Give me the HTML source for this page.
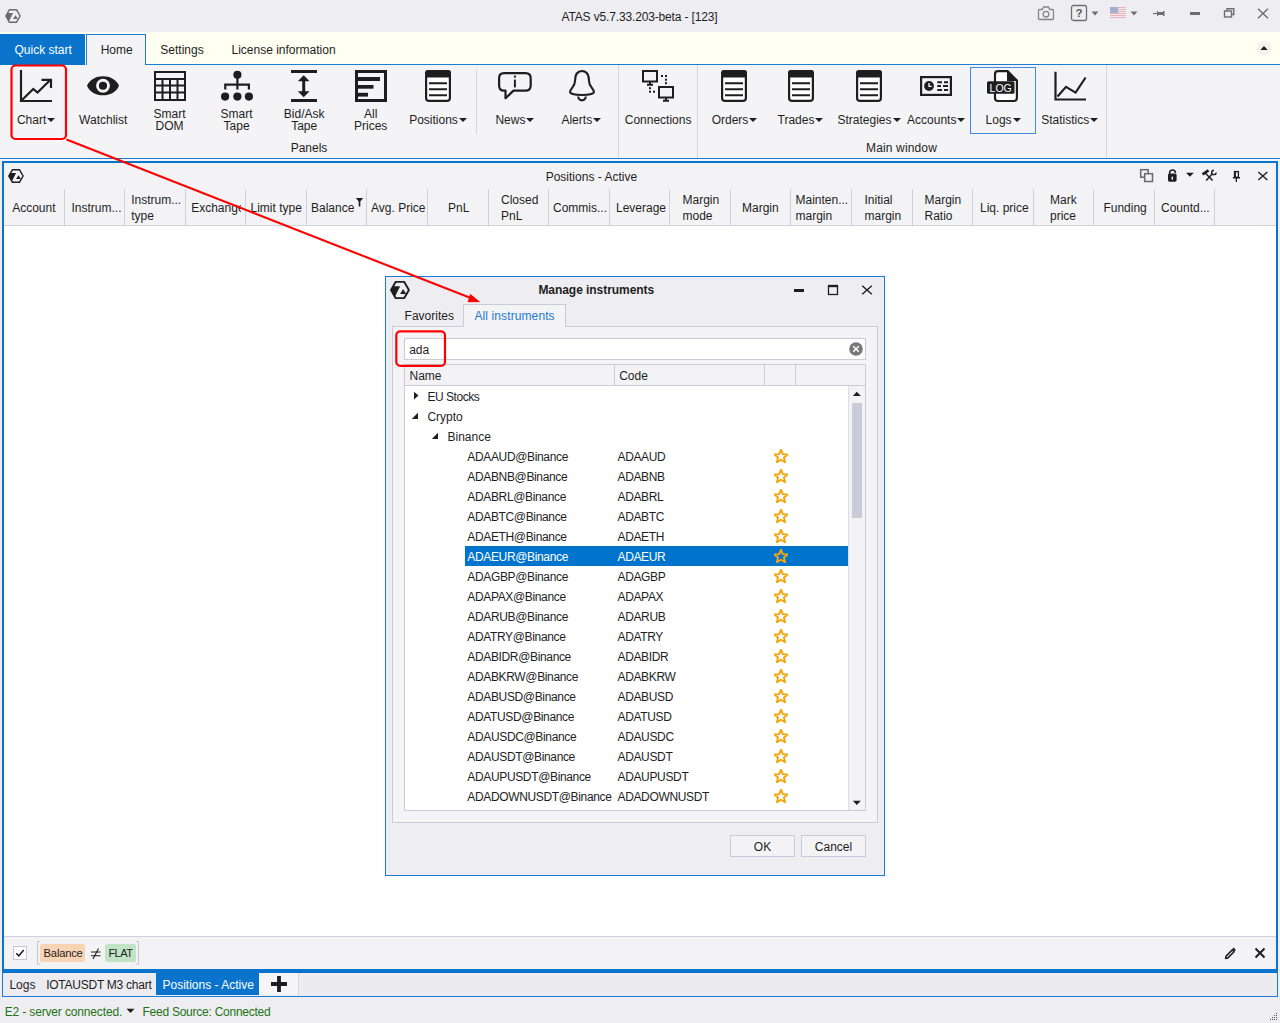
<!DOCTYPE html><html><head><meta charset="utf-8"><style>
html,body{margin:0;padding:0;}
body{width:1280px;height:1023px;overflow:hidden;position:relative;background:#eeedf2;font-family:"Liberation Sans",sans-serif;color:#1e1e1e;}
.a{position:absolute;}
.t{position:absolute;white-space:nowrap;line-height:1;}
</style></head><body>

<div class="a" style="left:0px;top:0px;width:1280px;height:32px;background:#eeedf2;"></div>
<div class="a" style="left:0px;top:32px;width:1280px;height:33px;background:#fffff2;"></div>
<svg class="a" style="left:5px;top:9px;" width="16" height="14" viewBox="0 0 16 14"><g transform="scale(0.8000,0.7865)"><path d="M5.6 0.9 H14.3 L18.9 8.9 L14.3 16.9 H5.6 L1 8.9 Z" fill="none" stroke="#6b6b70" stroke-width="1.8" stroke-linejoin="round"/><path d="M3.2 5.1 H10.1 L4.8 15.8 L0.8 8.9 Z" fill="#6b6b70"/><path d="M13.1 8 L16.2 12.8 H10.1 Z" fill="#6b6b70"/></g></svg>
<div class="t" style="left:561.5px;top:11px;font-size:12px;letter-spacing:-0.15px;">ATAS v5.7.33.203-beta - [123]</div>
<svg class="a" style="left:1036px;top:4px;" width="20" height="18" viewBox="0 0 20 18"><path d="M3.5 5.5 H6.2 L7.6 3 H12.4 L13.8 5.5 H16.5 Q17.5 5.5 17.5 6.5 V14.5 Q17.5 15.5 16.5 15.5 H3.5 Q2.5 15.5 2.5 14.5 V6.5 Q2.5 5.5 3.5 5.5 Z" fill="none" stroke="#858589" stroke-width="1.3"/><circle cx="10" cy="10.2" r="2.8" fill="none" stroke="#858589" stroke-width="1.3"/></svg>
<svg class="a" style="left:1070px;top:4px;" width="18" height="18" viewBox="0 0 18 18"><rect x="1.5" y="1.5" width="15" height="15" rx="2" fill="none" stroke="#6e6e72" stroke-width="1.3"/><text x="9" y="13.3" font-family="Liberation Sans" font-size="11.5" font-weight="bold" text-anchor="middle" fill="#58585c">?</text></svg>
<svg class="a" style="left:1091px;top:11px;" width="8" height="5" viewBox="0 0 8 5"><path d="M0.5 0.5 H7.5 L4 4.5 Z" fill="#6e6e72"/></svg>
<svg class="a" style="left:1110px;top:7px;" width="16" height="12" viewBox="0 0 16 12"><rect x="0" y="0" width="16" height="12" fill="#f1e9ec"/><rect x="0" y="0" width="16" height="1" fill="#e8b4bb"/><rect x="0" y="2" width="16" height="1" fill="#e8b4bb"/><rect x="0" y="4" width="16" height="1" fill="#e8b4bb"/><rect x="0" y="6" width="16" height="1" fill="#e8b4bb"/><rect x="0" y="8" width="16" height="1" fill="#e8b4bb"/><rect x="0" y="10" width="16" height="1" fill="#e8b4bb"/><rect x="0" y="0" width="8" height="6" fill="#a4afd0"/></svg>
<svg class="a" style="left:1130px;top:11px;" width="8" height="5" viewBox="0 0 8 5"><path d="M0.5 0.5 H7.5 L4 4.5 Z" fill="#6e6e72"/></svg>
<svg class="a" style="left:1152px;top:9px;" width="14" height="9" viewBox="0 0 14 9"><path d="M1 4.5 H5" stroke="#6e6e72" stroke-width="1.2"/><path d="M5 2 H6 V3 H11 V2 H12.5 V7 H11 V6 H6 V7 H5 Z" fill="#6e6e72"/></svg>
<div class="a" style="left:1190px;top:12px;width:10px;height:3px;background:#6e6e72;"></div>
<svg class="a" style="left:1222px;top:7px;" width="14" height="12" viewBox="0 0 14 12"><rect x="2.5" y="4" width="7" height="6" fill="none" stroke="#6e6e72" stroke-width="1.4"/><path d="M5 4 V1.7 H11.8 V7.5 H9.5" fill="none" stroke="#6e6e72" stroke-width="1.4"/></svg>
<svg class="a" style="left:1257px;top:8px;" width="12" height="11" viewBox="0 0 12 11"><path d="M1 0.8 L11 10.2 M11 0.8 L1 10.2" stroke="#6e6e72" stroke-width="1.4"/></svg>
<div class="a" style="left:0px;top:34px;width:85px;height:31px;background:#0a74cc;"></div>
<div class="t" style="left:14.5px;top:44px;font-size:12px;color:#ffffff;">Quick start</div>
<div class="a" style="left:146px;top:64px;width:1134px;height:1px;background:#1c7cd5;"></div>
<div class="a" style="left:86px;top:34px;width:60px;height:31px;background:#f4f4f6;border:1px solid #1c7cd5;border-bottom:none;box-sizing:border-box;"></div>
<div class="t" style="left:100.7px;top:44px;font-size:12px;">Home</div>
<div class="t" style="left:160.3px;top:44px;font-size:12px;">Settings</div>
<div class="t" style="left:231.5px;top:44px;font-size:12px;">License information</div>
<svg class="a" style="left:1256px;top:40px;" width="16" height="16" viewBox="0 0 16 16"><circle cx="8" cy="8" r="7.5" fill="#f2f2ee"/><path d="M4.3 10 H11.7 L8 6 Z" fill="#1e1e1e"/></svg>
<div class="a" style="left:0px;top:65px;width:1280px;height:93px;background:#f4f4f6;"></div>
<div class="a" style="left:0px;top:158px;width:1280px;height:1px;background:#1c7cd5;"></div>
<div class="a" style="left:0px;top:159px;width:1280px;height:2px;background:#f4f4f6;"></div>
<div class="a" style="left:618px;top:65px;width:1px;height:93px;background:#d3d4de;"></div>
<div class="a" style="left:697px;top:65px;width:1px;height:93px;background:#d3d4de;"></div>
<div class="a" style="left:1106px;top:65px;width:1px;height:93px;background:#d3d4de;"></div>
<div class="a" style="left:476px;top:69px;width:1px;height:65px;background:#d3d4de;"></div>
<div class="t" style="left:109px;top:142px;font-size:12px;width:400px;text-align:center;">Panels</div>
<div class="t" style="left:701.5px;top:142px;font-size:12px;width:400px;text-align:center;letter-spacing:0.15px;">Main window</div>
<svg class="a" style="left:16px;top:68px;" width="40" height="36" viewBox="0 0 40 36"><path d="M5 2 V33 H36" fill="none" stroke="#1e1e1e" stroke-width="2.2"/><path d="M6 32 L17.3 21 L21.5 24.5 L34.5 11.8" fill="none" stroke="#1e1e1e" stroke-width="2.2"/><path d="M25.5 11.8 H35 V20" fill="none" stroke="#1e1e1e" stroke-width="2.2"/></svg>
<div class="t" style="left:-163.9px;top:114px;font-size:12px;width:400px;text-align:center;">Chart<span style="display:inline-block;width:0;height:0;border-left:4px solid transparent;border-right:4px solid transparent;border-top:4.5px solid #1e1e1e;margin-left:1px;vertical-align:2px;"></span></div>
<svg class="a" style="left:85px;top:74px;" width="36" height="24" viewBox="0 0 36 24"><path d="M2 11.75 C7 -1, 29 -1, 34 11.75 C29 24.5, 7 24.5, 2 11.75 Z" fill="#1e1e1e"/><circle cx="18" cy="11.75" r="6.9" fill="#f4f4f6"/><circle cx="18" cy="11.75" r="4.1" fill="#1e1e1e"/></svg>
<div class="t" style="left:-96.8px;top:114px;font-size:12px;width:400px;text-align:center;">Watchlist</div>
<svg class="a" style="left:154px;top:71px;" width="32" height="30" viewBox="0 0 32 30"><rect x="1" y="1" width="30" height="28" fill="none" stroke="#1e1e1e" stroke-width="2"/><path d="M1 8 H31" stroke="#1e1e1e" stroke-width="2"/><path d="M1 14.5 H31" stroke="#1e1e1e" stroke-width="2"/><path d="M1 21.5 H31" stroke="#1e1e1e" stroke-width="2"/><path d="M8.5 8 V29" stroke="#1e1e1e" stroke-width="2"/><path d="M16 8 V29" stroke="#1e1e1e" stroke-width="2"/><path d="M23.5 8 V29" stroke="#1e1e1e" stroke-width="2"/></svg>
<div class="t" style="left:-30.5px;top:108px;font-size:12px;width:400px;text-align:center;">Smart</div>
<div class="t" style="left:-30.5px;top:120px;font-size:12px;width:400px;text-align:center;">DOM</div>
<svg class="a" style="left:219px;top:69px;" width="36" height="34" viewBox="0 0 36 34"><circle cx="18.4" cy="5.8" r="4.1" fill="#1e1e1e"/><circle cx="6.1" cy="27.6" r="4.1" fill="#1e1e1e"/><circle cx="18.4" cy="27.6" r="4.1" fill="#1e1e1e"/><circle cx="29.9" cy="27.6" r="4.1" fill="#1e1e1e"/><path d="M6.3 20.5 V15.6 H29.9 V20.5 M18.4 9 V20.5" fill="none" stroke="#1e1e1e" stroke-width="2.2"/></svg>
<div class="t" style="left:36.599999999999994px;top:108px;font-size:12px;width:400px;text-align:center;">Smart</div>
<div class="t" style="left:36.599999999999994px;top:120px;font-size:12px;width:400px;text-align:center;">Tape</div>
<svg class="a" style="left:289px;top:68px;" width="30" height="36" viewBox="0 0 30 36"><rect x="2" y="2" width="26" height="3" fill="#1e1e1e"/><rect x="2" y="31" width="26" height="3" fill="#1e1e1e"/><path d="M14.7 7.3 L20.6 13.3 H8.8 Z M14.7 29.2 L20.6 23.2 H8.8 Z" fill="#1e1e1e"/><rect x="13.2" y="12" width="3" height="12" fill="#1e1e1e"/></svg>
<div class="t" style="left:104.19999999999999px;top:108px;font-size:12px;width:400px;text-align:center;">Bid/Ask</div>
<div class="t" style="left:104.19999999999999px;top:120px;font-size:12px;width:400px;text-align:center;">Tape</div>
<svg class="a" style="left:353px;top:68px;" width="36" height="36" viewBox="0 0 36 36"><rect x="3.5" y="3.5" width="29" height="29" fill="none" stroke="#1e1e1e" stroke-width="3"/><rect x="2" y="9" width="25" height="4" fill="#1e1e1e"/><rect x="2" y="17" width="18.5" height="3.7" fill="#1e1e1e"/><rect x="2" y="24.8" width="13" height="3.8" fill="#1e1e1e"/></svg>
<div class="t" style="left:170.7px;top:108px;font-size:12px;width:400px;text-align:center;">All</div>
<div class="t" style="left:170.7px;top:120px;font-size:12px;width:400px;text-align:center;">Prices</div>
<svg class="a" style="left:424px;top:69px;" width="28" height="34" viewBox="0 0 28 34"><rect x="2.1" y="2.1" width="23.8" height="29.8" rx="3" fill="#ffffff" stroke="#1e1e1e" stroke-width="2.2"/><path d="M1 4 Q1 1 4 1 H24 Q27 1 27 4 V8.5 H1 Z" fill="#1e1e1e"/><path d="M5 14.3 H23 M5 20.3 H23 M5 26.3 H23" stroke="#1e1e1e" stroke-width="2"/></svg>
<div class="t" style="left:238px;top:114px;font-size:12px;width:400px;text-align:center;">Positions<span style="display:inline-block;width:0;height:0;border-left:4px solid transparent;border-right:4px solid transparent;border-top:4.5px solid #1e1e1e;margin-left:1px;vertical-align:2px;"></span></div>
<svg class="a" style="left:497px;top:70px;" width="36" height="32" viewBox="0 0 36 32"><path d="M7 3.1 H28.5 Q33.7 3.1 33.7 8.3 V15.4 Q33.7 20.6 28.5 20.6 H16.5 L8.5 28.3 V20.6 H7 Q2.1 20.6 2.1 15.4 V8.3 Q2.1 3.1 7 3.1 Z" fill="none" stroke="#1e1e1e" stroke-width="2.2" stroke-linejoin="round"/><rect x="16.9" y="5.6" width="2" height="2" fill="#1e1e1e"/><rect x="16.9" y="9.6" width="2" height="7.8" fill="#1e1e1e"/></svg>
<div class="t" style="left:314.9px;top:114px;font-size:12px;width:400px;text-align:center;">News<span style="display:inline-block;width:0;height:0;border-left:4px solid transparent;border-right:4px solid transparent;border-top:4.5px solid #1e1e1e;margin-left:1px;vertical-align:2px;"></span></div>
<svg class="a" style="left:567px;top:68px;" width="30" height="36" viewBox="0 0 30 36"><path d="M15 3 C9.5 3 8 8 8 13 C8 19 3 20.5 3 24 C3 28 27 28 27 24 C27 20.5 22 19 22 13 C22 8 20.5 3 15 3 Z" fill="none" stroke="#1e1e1e" stroke-width="2.1" stroke-linejoin="round"/><path d="M11.2 28.6 A3.8 3.8 0 0 0 18.8 28.6" fill="none" stroke="#1e1e1e" stroke-width="2.1"/></svg>
<div class="t" style="left:381.29999999999995px;top:114px;font-size:12px;width:400px;text-align:center;">Alerts<span style="display:inline-block;width:0;height:0;border-left:4px solid transparent;border-right:4px solid transparent;border-top:4.5px solid #1e1e1e;margin-left:1px;vertical-align:2px;"></span></div>
<svg class="a" style="left:640px;top:68px;" width="36" height="36" viewBox="0 0 36 36"><rect x="3" y="3" width="14" height="10.5" fill="none" stroke="#1e1e1e" stroke-width="2"/><path d="M10 13.5 V16.5 M7 16.7 H13" stroke="#1e1e1e" stroke-width="2"/><rect x="19" y="19" width="14" height="10.5" fill="none" stroke="#1e1e1e" stroke-width="2"/><path d="M26 29.5 V32.5 M23 32.7 H29" stroke="#1e1e1e" stroke-width="2"/><rect x="21" y="7" width="2" height="2" fill="#1e1e1e"/><rect x="25" y="7" width="2" height="2" fill="#1e1e1e"/><rect x="25" y="10.7" width="2" height="2" fill="#1e1e1e"/><rect x="25" y="14.2" width="2" height="2" fill="#1e1e1e"/><rect x="9" y="19.2" width="2" height="2" fill="#1e1e1e"/><rect x="9" y="22.7" width="2" height="2" fill="#1e1e1e"/><rect x="13" y="22.7" width="2" height="2" fill="#1e1e1e"/></svg>
<div class="t" style="left:458.1px;top:114px;font-size:12px;width:400px;text-align:center;">Connections</div>
<svg class="a" style="left:720px;top:69px;" width="28" height="34" viewBox="0 0 28 34"><rect x="2.1" y="2.1" width="23.8" height="29.8" rx="3" fill="#ffffff" stroke="#1e1e1e" stroke-width="2.2"/><path d="M1 4 Q1 1 4 1 H24 Q27 1 27 4 V8.5 H1 Z" fill="#1e1e1e"/><path d="M5 14.3 H23 M5 20.3 H23 M5 26.3 H23" stroke="#1e1e1e" stroke-width="2"/></svg>
<div class="t" style="left:534.5px;top:114px;font-size:12px;width:400px;text-align:center;">Orders<span style="display:inline-block;width:0;height:0;border-left:4px solid transparent;border-right:4px solid transparent;border-top:4.5px solid #1e1e1e;margin-left:1px;vertical-align:2px;"></span></div>
<svg class="a" style="left:787px;top:69px;" width="28" height="34" viewBox="0 0 28 34"><rect x="2.1" y="2.1" width="23.8" height="29.8" rx="3" fill="#ffffff" stroke="#1e1e1e" stroke-width="2.2"/><path d="M1 4 Q1 1 4 1 H24 Q27 1 27 4 V8.5 H1 Z" fill="#1e1e1e"/><path d="M5 14.3 H23 M5 20.3 H23 M5 26.3 H23" stroke="#1e1e1e" stroke-width="2"/></svg>
<div class="t" style="left:600.5px;top:114px;font-size:12px;width:400px;text-align:center;">Trades<span style="display:inline-block;width:0;height:0;border-left:4px solid transparent;border-right:4px solid transparent;border-top:4.5px solid #1e1e1e;margin-left:1px;vertical-align:2px;"></span></div>
<svg class="a" style="left:855px;top:69px;" width="28" height="34" viewBox="0 0 28 34"><rect x="2.1" y="2.1" width="23.8" height="29.8" rx="3" fill="#ffffff" stroke="#1e1e1e" stroke-width="2.2"/><path d="M1 4 Q1 1 4 1 H24 Q27 1 27 4 V8.5 H1 Z" fill="#1e1e1e"/><path d="M5 14.3 H23 M5 20.3 H23 M5 26.3 H23" stroke="#1e1e1e" stroke-width="2"/></svg>
<div class="t" style="left:669px;top:114px;font-size:12px;width:400px;text-align:center;">Strategies<span style="display:inline-block;width:0;height:0;border-left:4px solid transparent;border-right:4px solid transparent;border-top:4.5px solid #1e1e1e;margin-left:1px;vertical-align:2px;"></span></div>
<svg class="a" style="left:918px;top:74px;" width="36" height="24" viewBox="0 0 36 24"><rect x="3.1" y="3.1" width="29.8" height="17.8" fill="none" stroke="#1e1e1e" stroke-width="2.2"/><circle cx="11" cy="12" r="4.9" fill="#1e1e1e"/><path d="M11 9 V12.3 H13.7" fill="none" stroke="#fff" stroke-width="1.3"/><path d="M19.3 8.2 H24 M26 8.2 H30 M19.3 12 H23 M25 12 H30 M19.3 16 H24 M26 16 H30" stroke="#1e1e1e" stroke-width="2"/></svg>
<div class="t" style="left:736.25px;top:114px;font-size:12px;width:400px;text-align:center;">Accounts<span style="display:inline-block;width:0;height:0;border-left:4px solid transparent;border-right:4px solid transparent;border-top:4.5px solid #1e1e1e;margin-left:1px;vertical-align:2px;"></span></div>
<div class="a" style="left:970px;top:67px;width:66px;height:67px;border:1px solid #3d8ee0;box-sizing:border-box;"></div>
<svg class="a" style="left:985px;top:68px;" width="36" height="36" viewBox="0 0 36 36"><path d="M13 3.1 H22.5 L31.9 12.5 V30 Q31.9 33 28.9 33 H13 Q10 33 10 30 V6.1 Q10 3.1 13 3.1 Z" fill="#fff" stroke="#1e1e1e" stroke-width="2.2" stroke-linejoin="round"/><path d="M22 2.5 L32.5 13 H22 Z" fill="#1e1e1e"/><rect x="2" y="13.3" width="27.5" height="12.5" rx="1.5" fill="#1e1e1e"/><text x="15.7" y="24" font-family="Liberation Sans" font-size="10.5" text-anchor="middle" fill="#fff">LOG</text></svg>
<div class="t" style="left:803.1px;top:114px;font-size:12px;width:400px;text-align:center;">Logs<span style="display:inline-block;width:0;height:0;border-left:4px solid transparent;border-right:4px solid transparent;border-top:4.5px solid #1e1e1e;margin-left:1px;vertical-align:2px;"></span></div>
<svg class="a" style="left:1052px;top:69px;" width="38" height="34" viewBox="0 0 38 34"><path d="M3.5 2.8 V30.5 H34" fill="none" stroke="#1e1e1e" stroke-width="2.2"/><path d="M5.5 27.5 L14 17.8 L23.6 23.6 L33.6 8.5" fill="none" stroke="#1e1e1e" stroke-width="2.2"/></svg>
<div class="t" style="left:869.75px;top:114px;font-size:12px;width:400px;text-align:center;">Statistics<span style="display:inline-block;width:0;height:0;border-left:4px solid transparent;border-right:4px solid transparent;border-top:4.5px solid #1e1e1e;margin-left:1px;vertical-align:2px;"></span></div>
<div class="a" style="left:2px;top:161px;width:1276px;height:812px;background:#0a74cc;"></div>
<div class="a" style="left:4px;top:163px;width:1272px;height:63px;background:#f3f3f6;"></div>
<div class="a" style="left:4px;top:226px;width:1272px;height:710px;background:#ffffff;"></div>
<div class="a" style="left:4px;top:936px;width:1272px;height:1px;background:#cfd1dc;"></div>
<div class="a" style="left:4px;top:937px;width:1272px;height:32px;background:#f3f3f6;"></div>
<svg class="a" style="left:8px;top:169px;" width="16" height="14" viewBox="0 0 16 14"><g transform="scale(0.8000,0.7865)"><path d="M5.6 0.9 H14.3 L18.9 8.9 L14.3 16.9 H5.6 L1 8.9 Z" fill="none" stroke="#1e1e1e" stroke-width="1.8" stroke-linejoin="round"/><path d="M3.2 5.1 H10.1 L4.8 15.8 L0.8 8.9 Z" fill="#1e1e1e"/><path d="M13.1 8 L16.2 12.8 H10.1 Z" fill="#1e1e1e"/></g></svg>
<div class="t" style="left:545.7px;top:171px;font-size:12px;">Positions - Active</div>
<svg class="a" style="left:1138px;top:167px;" width="17" height="17" viewBox="0 0 17 17"><rect x="2.7" y="2.7" width="7.5" height="7.5" fill="none" stroke="#6a6a6a" stroke-width="1.5"/><rect x="6.7" y="6.7" width="7.8" height="7.8" fill="#f3f3f6" stroke="#6a6a6a" stroke-width="1.5"/></svg>
<svg class="a" style="left:1166px;top:167px;" width="13" height="17" viewBox="0 0 13 17"><path d="M3.6 7.5 V5.9 A2.9 2.9 0 0 1 9.4 5.9 V4.9" fill="none" stroke="#1e1e1e" stroke-width="1.5"/><rect x="2" y="6.6" width="8.6" height="8.1" rx="1.6" fill="#1e1e1e"/><rect x="5.6" y="9.6" width="1.4" height="3" fill="#fff"/></svg>
<svg class="a" style="left:1185px;top:172px;" width="10" height="6" viewBox="0 0 10 6"><path d="M1 0.8 H8.8 L4.9 4.7 Z" fill="#1e1e1e"/></svg>
<svg class="a" style="left:1201px;top:167px;" width="16" height="17" viewBox="0 0 16 17"><path d="M4.2 6 L11.6 13.6" stroke="#1e1e1e" stroke-width="1.5"/><path d="M1.5 7.4 L7.5 3.4" stroke="#1e1e1e" stroke-width="2.8"/><path d="M5.2 13.6 L11.6 6.6" stroke="#1e1e1e" stroke-width="1.5"/><path d="M12.9 3.2 A2.2 2.2 0 1 0 15.1 5.4" fill="none" stroke="#1e1e1e" stroke-width="1.4"/></svg>
<svg class="a" style="left:1230px;top:167px;" width="12" height="17" viewBox="0 0 12 17"><rect x="4.6" y="4.6" width="3.8" height="5.6" fill="none" stroke="#1e1e1e" stroke-width="1.3"/><rect x="3.9" y="3.9" width="2" height="6.3" fill="#1e1e1e"/><rect x="2.9" y="10" width="7.1" height="1.5" fill="#1e1e1e"/><rect x="5.7" y="11" width="1.3" height="4" fill="#1e1e1e"/></svg>
<svg class="a" style="left:1256px;top:170px;" width="13" height="12" viewBox="0 0 13 12"><path d="M2.3 2 L11.3 10 M11.3 2 L2.3 10" stroke="#1e1e1e" stroke-width="1.4"/></svg>
<div class="a" style="left:64px;top:189px;width:1px;height:36px;background:#cfd1dc;"></div>
<div class="a" style="left:124px;top:189px;width:1px;height:36px;background:#cfd1dc;"></div>
<div class="a" style="left:185px;top:189px;width:1px;height:36px;background:#cfd1dc;"></div>
<div class="a" style="left:245px;top:189px;width:1px;height:36px;background:#cfd1dc;"></div>
<div class="a" style="left:306px;top:189px;width:1px;height:36px;background:#cfd1dc;"></div>
<div class="a" style="left:366px;top:189px;width:1px;height:36px;background:#cfd1dc;"></div>
<div class="a" style="left:427px;top:189px;width:1px;height:36px;background:#cfd1dc;"></div>
<div class="a" style="left:488px;top:189px;width:1px;height:36px;background:#cfd1dc;"></div>
<div class="a" style="left:548px;top:189px;width:1px;height:36px;background:#cfd1dc;"></div>
<div class="a" style="left:609px;top:189px;width:1px;height:36px;background:#cfd1dc;"></div>
<div class="a" style="left:669px;top:189px;width:1px;height:36px;background:#cfd1dc;"></div>
<div class="a" style="left:730px;top:189px;width:1px;height:36px;background:#cfd1dc;"></div>
<div class="a" style="left:790px;top:189px;width:1px;height:36px;background:#cfd1dc;"></div>
<div class="a" style="left:851px;top:189px;width:1px;height:36px;background:#cfd1dc;"></div>
<div class="a" style="left:912px;top:189px;width:1px;height:36px;background:#cfd1dc;"></div>
<div class="a" style="left:972px;top:189px;width:1px;height:36px;background:#cfd1dc;"></div>
<div class="a" style="left:1033px;top:189px;width:1px;height:36px;background:#cfd1dc;"></div>
<div class="a" style="left:1093px;top:189px;width:1px;height:36px;background:#cfd1dc;"></div>
<div class="a" style="left:1154px;top:189px;width:1px;height:36px;background:#cfd1dc;"></div>
<div class="a" style="left:1214px;top:189px;width:1px;height:36px;background:#cfd1dc;"></div>
<div class="a" style="left:4px;top:225px;width:1272px;height:1px;background:#cfd1dc;"></div>
<div class="t" style="left:12.2px;top:202px;font-size:12px;">Account</div>
<div class="t" style="left:71.5px;top:202px;font-size:12px;">Instrum...</div>
<div class="t" style="left:131.2px;top:194px;font-size:12px;">Instrum...</div>
<div class="t" style="left:131.2px;top:210px;font-size:12px;">type</div>
<div class="t" style="left:191.2px;top:202px;font-size:12px;">Exchange</div>
<div class="t" style="left:250.5px;top:202px;font-size:12px;">Limit type</div>
<div class="t" style="left:311px;top:202px;font-size:12px;">Balance</div>
<div class="t" style="left:371px;top:202px;font-size:12px;">Avg. Price</div>
<div class="t" style="left:258.75px;top:202px;font-size:12px;width:400px;text-align:center;">PnL</div>
<div class="t" style="left:501px;top:194px;font-size:12px;">Closed</div>
<div class="t" style="left:501px;top:210px;font-size:12px;">PnL</div>
<div class="t" style="left:553px;top:202px;font-size:12px;">Commis...</div>
<div class="t" style="left:616px;top:202px;font-size:12px;">Leverage</div>
<div class="t" style="left:682.5px;top:194px;font-size:12px;">Margin</div>
<div class="t" style="left:682.5px;top:210px;font-size:12px;">mode</div>
<div class="t" style="left:742px;top:202px;font-size:12px;">Margin</div>
<div class="t" style="left:795.5px;top:194px;font-size:12px;">Mainten...</div>
<div class="t" style="left:795.5px;top:210px;font-size:12px;">margin</div>
<div class="t" style="left:864.5px;top:194px;font-size:12px;">Initial</div>
<div class="t" style="left:864.5px;top:210px;font-size:12px;">margin</div>
<div class="t" style="left:924.5px;top:194px;font-size:12px;">Margin</div>
<div class="t" style="left:924.5px;top:210px;font-size:12px;">Ratio</div>
<div class="t" style="left:980px;top:202px;font-size:12px;">Liq. price</div>
<div class="t" style="left:1050px;top:194px;font-size:12px;">Mark</div>
<div class="t" style="left:1050px;top:210px;font-size:12px;">price</div>
<div class="t" style="left:1103.4px;top:202px;font-size:12px;">Funding</div>
<div class="t" style="left:1161px;top:202px;font-size:12px;">Countd...</div>
<div class="a" style="left:241px;top:189px;width:4px;height:36px;background:#f3f3f6;"></div>
<svg class="a" style="left:355px;top:197px;" width="9" height="11" viewBox="0 0 9 11"><path d="M0.8 1 H8.2 L5.3 4.5 V9.5 L3.7 9.5 V4.5 Z" fill="#1e1e1e"/></svg>
<div class="a" style="left:13px;top:946px;width:14px;height:14px;background:#ffffff;border:1px solid #c5c7d3;box-sizing:border-box;"></div>
<svg class="a" style="left:13px;top:946px;" width="14" height="14" viewBox="0 0 14 14"><path d="M3.3 7.2 L5.8 9.8 L10.8 4" fill="none" stroke="#1e1e1e" stroke-width="1.5"/></svg>
<svg class="a" style="left:36px;top:940px;" width="104" height="26" viewBox="0 0 104 26"><path d="M4 1.5 H1.5 V24.5 H4 M100 1.5 H102.5 V24.5 H100" fill="none" stroke="#c5c7d3" stroke-width="1"/></svg>
<div class="a" style="left:40px;top:944px;width:45px;height:18px;background:#f8d4b4;border-radius:2px;"></div>
<div class="t" style="left:43.6px;top:948px;font-size:11.2px;letter-spacing:-0.2px;">Balance</div>
<svg class="a" style="left:89px;top:947px;" width="13" height="13" viewBox="0 0 13 13"><path d="M2 5 H11.5 M2 8.8 H11.5" stroke="#1e1e1e" stroke-width="1.1"/><path d="M4 12 L9.5 1.5" stroke="#1e1e1e" stroke-width="1.1"/></svg>
<div class="a" style="left:105px;top:944px;width:31px;height:18px;background:#c2e4c6;border-radius:2px;"></div>
<div class="t" style="left:108.4px;top:948px;font-size:11.2px;letter-spacing:-0.6px;">FLAT</div>
<svg class="a" style="left:1224px;top:947px;" width="13" height="13" viewBox="0 0 13 13"><path d="M1.6 11.4 L2.1 9.1 L8.3 2.9 L10.1 4.7 L3.9 10.9 Z" fill="none" stroke="#1e1e1e" stroke-width="1.5" stroke-linejoin="round"/><path d="M8.2 1.9 L9.6 0.6 L11.9 2.9 L10.6 4.3 Z" fill="#1e1e1e"/></svg>
<svg class="a" style="left:1254px;top:947px;" width="12" height="12" viewBox="0 0 12 12"><path d="M1.5 1.5 L10.5 10.5 M10.5 1.5 L1.5 10.5" stroke="#1e1e1e" stroke-width="2"/></svg>
<div class="a" style="left:2px;top:973px;width:1276px;height:24px;background:#1c7cd5;"></div>
<div class="a" style="left:3px;top:973px;width:1274px;height:23px;background:#ebebf0;"></div>
<div class="t" style="left:9.4px;top:979px;font-size:12px;">Logs</div>
<div class="t" style="left:46.2px;top:979px;font-size:12px;letter-spacing:-0.25px;">IOTAUSDT M3 chart</div>
<div class="a" style="left:156px;top:973px;width:103px;height:22px;background:#0a74cc;"></div>
<div class="t" style="left:162.5px;top:979px;font-size:12px;color:#ffffff;">Positions - Active</div>
<div class="a" style="left:259px;top:973px;width:40px;height:22px;background:#f5f5f8;border-right:1px solid #d6d6e0;box-sizing:border-box;"></div>
<svg class="a" style="left:270px;top:975px;" width="18" height="18" viewBox="0 0 18 18"><path d="M9 1 V17 M1 9 H17" stroke="#1e1e1e" stroke-width="3.8"/></svg>
<div class="t" style="left:4.7px;top:1006px;font-size:12px;color:#1d7413;letter-spacing:-0.15px;">E2 - server connected.</div>
<svg class="a" style="left:126px;top:1008px;" width="10" height="6" viewBox="0 0 10 6"><path d="M0.5 0.7 H8.5 L4.5 5 Z" fill="#1e1e1e"/></svg>
<div class="t" style="left:142.5px;top:1006px;font-size:12px;color:#1d7413;letter-spacing:-0.25px;">Feed Source: Connected</div>
<svg class="a" style="left:1270px;top:1013px;" width="8" height="8" viewBox="0 0 8 8"><rect x="6" y="0" width="1" height="1" fill="#555"/><rect x="4" y="2" width="1" height="1" fill="#555"/><rect x="6" y="2" width="1" height="1" fill="#555"/><rect x="2" y="4" width="1" height="1" fill="#555"/><rect x="4" y="4" width="1" height="1" fill="#555"/><rect x="6" y="4" width="1" height="1" fill="#555"/><rect x="0" y="6" width="1" height="1" fill="#555"/><rect x="2" y="6" width="1" height="1" fill="#555"/><rect x="4" y="6" width="1" height="1" fill="#555"/><rect x="6" y="6" width="1" height="1" fill="#555"/></svg>
<div class="a" style="left:385px;top:276px;width:500px;height:600px;background:#eeeef2;border:1px solid #1c7cd5;box-sizing:border-box;"></div>
<svg class="a" style="left:390px;top:281px;" width="20" height="18" viewBox="0 0 20 18"><g transform="scale(1.0000,1.0112)"><path d="M5.6 0.9 H14.3 L18.9 8.9 L14.3 16.9 H5.6 L1 8.9 Z" fill="none" stroke="#1e1e1e" stroke-width="1.9" stroke-linejoin="round"/><path d="M3.2 5.1 H10.1 L4.8 15.8 L0.8 8.9 Z" fill="#1e1e1e"/><path d="M13.1 8 L16.2 12.8 H10.1 Z" fill="#1e1e1e"/></g></svg>
<div class="t" style="left:538.4px;top:284px;font-size:12px;font-weight:bold;letter-spacing:-0.05px;">Manage instruments</div>
<div class="a" style="left:794px;top:289px;width:10px;height:3px;background:#1e1e1e;"></div>
<svg class="a" style="left:827px;top:284px;" width="12" height="12" viewBox="0 0 12 12"><rect x="1.5" y="1.5" width="9" height="9" fill="none" stroke="#1e1e1e" stroke-width="1.3"/><rect x="1" y="1" width="10" height="2.2" fill="#1e1e1e"/></svg>
<svg class="a" style="left:861px;top:285px;" width="12" height="10" viewBox="0 0 12 10"><path d="M1.2 0.8 L10.8 9.2 M10.8 0.8 L1.2 9.2" stroke="#1e1e1e" stroke-width="1.4"/></svg>
<div class="a" style="left:392px;top:326px;width:486px;height:497px;background:#f4f4f6;border:1px solid #c9cbd8;box-sizing:border-box;"></div>
<div class="t" style="left:404.6px;top:310px;font-size:12px;">Favorites</div>
<div class="a" style="left:463px;top:304px;width:103px;height:23px;background:#f4f4f6;border:1px solid #c9cbd8;border-bottom:none;box-sizing:border-box;"></div>
<div class="t" style="left:474.5px;top:310px;font-size:12px;color:#1a78d0;letter-spacing:0.1px;">All instruments</div>
<div class="a" style="left:404px;top:338px;width:462px;height:22px;background:#ffffff;border:1px solid #c9cbd8;box-sizing:border-box;"></div>
<div class="t" style="left:409.2px;top:344px;font-size:12px;">ada</div>
<svg class="a" style="left:849px;top:342px;" width="14" height="14" viewBox="0 0 14 14"><circle cx="7" cy="7" r="6.8" fill="#777779"/><path d="M4.2 4.2 L9.8 9.8 M9.8 4.2 L4.2 9.8" stroke="#fff" stroke-width="1.5"/></svg>
<div class="a" style="left:404px;top:364px;width:462px;height:447px;background:#ffffff;border:1px solid #c9cbd8;box-sizing:border-box;"></div>
<div class="a" style="left:405px;top:365px;width:460px;height:20px;background:#f3f3f6;"></div>
<div class="a" style="left:405px;top:385px;width:460px;height:1px;background:#c9cbd8;"></div>
<div class="a" style="left:614px;top:365px;width:1px;height:20px;background:#c9cbd8;"></div>
<div class="a" style="left:764px;top:365px;width:1px;height:20px;background:#c9cbd8;"></div>
<div class="a" style="left:795px;top:365px;width:1px;height:20px;background:#c9cbd8;"></div>
<div class="t" style="left:409.5px;top:370px;font-size:12px;">Name</div>
<div class="t" style="left:619.2px;top:370px;font-size:12px;">Code</div>
<div class="a" style="left:848px;top:386px;width:17px;height:424px;background:#f3f3f6;border-left:1px solid #dcdde6;box-sizing:border-box;"></div>
<svg class="a" style="left:852px;top:391px;" width="10" height="6" viewBox="0 0 10 6"><path d="M0.8 5 H8.8 L4.8 0.8 Z" fill="#1e1e1e"/></svg>
<div class="a" style="left:852px;top:403px;width:10px;height:115px;background:#c9cbd8;"></div>
<svg class="a" style="left:852px;top:800px;" width="10" height="6" viewBox="0 0 10 6"><path d="M0.8 0.8 H8.8 L4.8 5 Z" fill="#1e1e1e"/></svg>
<svg class="a" style="left:413px;top:391px;" width="7" height="10" viewBox="0 0 7 10"><path d="M1 0.8 L5.5 4.6 L1 8.4 Z" fill="#1e1e1e"/></svg>
<div class="t" style="left:427.4px;top:391px;font-size:12px;letter-spacing:-0.45px;">EU Stocks</div>
<svg class="a" style="left:411px;top:412px;" width="8" height="8" viewBox="0 0 8 8"><path d="M7 0.8 V7 H0.8 Z" fill="#1e1e1e"/></svg>
<div class="t" style="left:427.4px;top:411px;font-size:12px;">Crypto</div>
<svg class="a" style="left:431px;top:432px;" width="8" height="8" viewBox="0 0 8 8"><path d="M7 0.8 V7 H0.8 Z" fill="#1e1e1e"/></svg>
<div class="t" style="left:447.5px;top:431px;font-size:12px;">Binance</div>
<div class="t" style="left:467.3px;top:451px;font-size:12px;letter-spacing:-0.35px;">ADAAUD@Binance</div>
<div class="t" style="left:617.5px;top:451px;font-size:12px;letter-spacing:-0.35px;">ADAAUD</div>
<svg class="a" style="left:773.5px;top:448.9px;" width="14" height="14" viewBox="0 0 14 14"><polygon points="7.00,0.60 8.82,5.09 13.66,5.44 9.95,8.56 11.11,13.26 7.00,10.70 2.89,13.26 4.05,8.56 0.34,5.44 5.18,5.09" fill="#ffffff" stroke="#f5a50e" stroke-width="1.9" stroke-linejoin="round"/></svg>
<div class="t" style="left:467.3px;top:471px;font-size:12px;letter-spacing:-0.35px;">ADABNB@Binance</div>
<div class="t" style="left:617.5px;top:471px;font-size:12px;letter-spacing:-0.35px;">ADABNB</div>
<svg class="a" style="left:773.5px;top:468.9px;" width="14" height="14" viewBox="0 0 14 14"><polygon points="7.00,0.60 8.82,5.09 13.66,5.44 9.95,8.56 11.11,13.26 7.00,10.70 2.89,13.26 4.05,8.56 0.34,5.44 5.18,5.09" fill="#ffffff" stroke="#f5a50e" stroke-width="1.9" stroke-linejoin="round"/></svg>
<div class="t" style="left:467.3px;top:491px;font-size:12px;letter-spacing:-0.35px;">ADABRL@Binance</div>
<div class="t" style="left:617.5px;top:491px;font-size:12px;letter-spacing:-0.35px;">ADABRL</div>
<svg class="a" style="left:773.5px;top:488.9px;" width="14" height="14" viewBox="0 0 14 14"><polygon points="7.00,0.60 8.82,5.09 13.66,5.44 9.95,8.56 11.11,13.26 7.00,10.70 2.89,13.26 4.05,8.56 0.34,5.44 5.18,5.09" fill="#ffffff" stroke="#f5a50e" stroke-width="1.9" stroke-linejoin="round"/></svg>
<div class="t" style="left:467.3px;top:511px;font-size:12px;letter-spacing:-0.35px;">ADABTC@Binance</div>
<div class="t" style="left:617.5px;top:511px;font-size:12px;letter-spacing:-0.35px;">ADABTC</div>
<svg class="a" style="left:773.5px;top:508.9px;" width="14" height="14" viewBox="0 0 14 14"><polygon points="7.00,0.60 8.82,5.09 13.66,5.44 9.95,8.56 11.11,13.26 7.00,10.70 2.89,13.26 4.05,8.56 0.34,5.44 5.18,5.09" fill="#ffffff" stroke="#f5a50e" stroke-width="1.9" stroke-linejoin="round"/></svg>
<div class="t" style="left:467.3px;top:531px;font-size:12px;letter-spacing:-0.35px;">ADAETH@Binance</div>
<div class="t" style="left:617.5px;top:531px;font-size:12px;letter-spacing:-0.35px;">ADAETH</div>
<svg class="a" style="left:773.5px;top:528.9px;" width="14" height="14" viewBox="0 0 14 14"><polygon points="7.00,0.60 8.82,5.09 13.66,5.44 9.95,8.56 11.11,13.26 7.00,10.70 2.89,13.26 4.05,8.56 0.34,5.44 5.18,5.09" fill="#ffffff" stroke="#f5a50e" stroke-width="1.9" stroke-linejoin="round"/></svg>
<div class="a" style="left:465px;top:546px;width:383px;height:20px;background:#0074cc;"></div>
<div class="t" style="left:467.3px;top:551px;font-size:12px;color:#ffffff;letter-spacing:-0.35px;">ADAEUR@Binance</div>
<div class="t" style="left:617.5px;top:551px;font-size:12px;color:#ffffff;letter-spacing:-0.35px;">ADAEUR</div>
<svg class="a" style="left:773.5px;top:548.9px;" width="14" height="14" viewBox="0 0 14 14"><polygon points="7.00,0.60 8.82,5.09 13.66,5.44 9.95,8.56 11.11,13.26 7.00,10.70 2.89,13.26 4.05,8.56 0.34,5.44 5.18,5.09" fill="#0074cc" stroke="#f5a50e" stroke-width="1.9" stroke-linejoin="round"/></svg>
<div class="t" style="left:467.3px;top:571px;font-size:12px;letter-spacing:-0.35px;">ADAGBP@Binance</div>
<div class="t" style="left:617.5px;top:571px;font-size:12px;letter-spacing:-0.35px;">ADAGBP</div>
<svg class="a" style="left:773.5px;top:568.9px;" width="14" height="14" viewBox="0 0 14 14"><polygon points="7.00,0.60 8.82,5.09 13.66,5.44 9.95,8.56 11.11,13.26 7.00,10.70 2.89,13.26 4.05,8.56 0.34,5.44 5.18,5.09" fill="#ffffff" stroke="#f5a50e" stroke-width="1.9" stroke-linejoin="round"/></svg>
<div class="t" style="left:467.3px;top:591px;font-size:12px;letter-spacing:-0.35px;">ADAPAX@Binance</div>
<div class="t" style="left:617.5px;top:591px;font-size:12px;letter-spacing:-0.35px;">ADAPAX</div>
<svg class="a" style="left:773.5px;top:588.9px;" width="14" height="14" viewBox="0 0 14 14"><polygon points="7.00,0.60 8.82,5.09 13.66,5.44 9.95,8.56 11.11,13.26 7.00,10.70 2.89,13.26 4.05,8.56 0.34,5.44 5.18,5.09" fill="#ffffff" stroke="#f5a50e" stroke-width="1.9" stroke-linejoin="round"/></svg>
<div class="t" style="left:467.3px;top:611px;font-size:12px;letter-spacing:-0.35px;">ADARUB@Binance</div>
<div class="t" style="left:617.5px;top:611px;font-size:12px;letter-spacing:-0.35px;">ADARUB</div>
<svg class="a" style="left:773.5px;top:608.9px;" width="14" height="14" viewBox="0 0 14 14"><polygon points="7.00,0.60 8.82,5.09 13.66,5.44 9.95,8.56 11.11,13.26 7.00,10.70 2.89,13.26 4.05,8.56 0.34,5.44 5.18,5.09" fill="#ffffff" stroke="#f5a50e" stroke-width="1.9" stroke-linejoin="round"/></svg>
<div class="t" style="left:467.3px;top:631px;font-size:12px;letter-spacing:-0.35px;">ADATRY@Binance</div>
<div class="t" style="left:617.5px;top:631px;font-size:12px;letter-spacing:-0.35px;">ADATRY</div>
<svg class="a" style="left:773.5px;top:628.9px;" width="14" height="14" viewBox="0 0 14 14"><polygon points="7.00,0.60 8.82,5.09 13.66,5.44 9.95,8.56 11.11,13.26 7.00,10.70 2.89,13.26 4.05,8.56 0.34,5.44 5.18,5.09" fill="#ffffff" stroke="#f5a50e" stroke-width="1.9" stroke-linejoin="round"/></svg>
<div class="t" style="left:467.3px;top:651px;font-size:12px;letter-spacing:-0.35px;">ADABIDR@Binance</div>
<div class="t" style="left:617.5px;top:651px;font-size:12px;letter-spacing:-0.35px;">ADABIDR</div>
<svg class="a" style="left:773.5px;top:648.9px;" width="14" height="14" viewBox="0 0 14 14"><polygon points="7.00,0.60 8.82,5.09 13.66,5.44 9.95,8.56 11.11,13.26 7.00,10.70 2.89,13.26 4.05,8.56 0.34,5.44 5.18,5.09" fill="#ffffff" stroke="#f5a50e" stroke-width="1.9" stroke-linejoin="round"/></svg>
<div class="t" style="left:467.3px;top:671px;font-size:12px;letter-spacing:-0.35px;">ADABKRW@Binance</div>
<div class="t" style="left:617.5px;top:671px;font-size:12px;letter-spacing:-0.35px;">ADABKRW</div>
<svg class="a" style="left:773.5px;top:668.9px;" width="14" height="14" viewBox="0 0 14 14"><polygon points="7.00,0.60 8.82,5.09 13.66,5.44 9.95,8.56 11.11,13.26 7.00,10.70 2.89,13.26 4.05,8.56 0.34,5.44 5.18,5.09" fill="#ffffff" stroke="#f5a50e" stroke-width="1.9" stroke-linejoin="round"/></svg>
<div class="t" style="left:467.3px;top:691px;font-size:12px;letter-spacing:-0.35px;">ADABUSD@Binance</div>
<div class="t" style="left:617.5px;top:691px;font-size:12px;letter-spacing:-0.35px;">ADABUSD</div>
<svg class="a" style="left:773.5px;top:688.9px;" width="14" height="14" viewBox="0 0 14 14"><polygon points="7.00,0.60 8.82,5.09 13.66,5.44 9.95,8.56 11.11,13.26 7.00,10.70 2.89,13.26 4.05,8.56 0.34,5.44 5.18,5.09" fill="#ffffff" stroke="#f5a50e" stroke-width="1.9" stroke-linejoin="round"/></svg>
<div class="t" style="left:467.3px;top:711px;font-size:12px;letter-spacing:-0.35px;">ADATUSD@Binance</div>
<div class="t" style="left:617.5px;top:711px;font-size:12px;letter-spacing:-0.35px;">ADATUSD</div>
<svg class="a" style="left:773.5px;top:708.9px;" width="14" height="14" viewBox="0 0 14 14"><polygon points="7.00,0.60 8.82,5.09 13.66,5.44 9.95,8.56 11.11,13.26 7.00,10.70 2.89,13.26 4.05,8.56 0.34,5.44 5.18,5.09" fill="#ffffff" stroke="#f5a50e" stroke-width="1.9" stroke-linejoin="round"/></svg>
<div class="t" style="left:467.3px;top:731px;font-size:12px;letter-spacing:-0.35px;">ADAUSDC@Binance</div>
<div class="t" style="left:617.5px;top:731px;font-size:12px;letter-spacing:-0.35px;">ADAUSDC</div>
<svg class="a" style="left:773.5px;top:728.9px;" width="14" height="14" viewBox="0 0 14 14"><polygon points="7.00,0.60 8.82,5.09 13.66,5.44 9.95,8.56 11.11,13.26 7.00,10.70 2.89,13.26 4.05,8.56 0.34,5.44 5.18,5.09" fill="#ffffff" stroke="#f5a50e" stroke-width="1.9" stroke-linejoin="round"/></svg>
<div class="t" style="left:467.3px;top:751px;font-size:12px;letter-spacing:-0.35px;">ADAUSDT@Binance</div>
<div class="t" style="left:617.5px;top:751px;font-size:12px;letter-spacing:-0.35px;">ADAUSDT</div>
<svg class="a" style="left:773.5px;top:748.9px;" width="14" height="14" viewBox="0 0 14 14"><polygon points="7.00,0.60 8.82,5.09 13.66,5.44 9.95,8.56 11.11,13.26 7.00,10.70 2.89,13.26 4.05,8.56 0.34,5.44 5.18,5.09" fill="#ffffff" stroke="#f5a50e" stroke-width="1.9" stroke-linejoin="round"/></svg>
<div class="t" style="left:467.3px;top:771px;font-size:12px;letter-spacing:-0.35px;">ADAUPUSDT@Binance</div>
<div class="t" style="left:617.5px;top:771px;font-size:12px;letter-spacing:-0.35px;">ADAUPUSDT</div>
<svg class="a" style="left:773.5px;top:768.9px;" width="14" height="14" viewBox="0 0 14 14"><polygon points="7.00,0.60 8.82,5.09 13.66,5.44 9.95,8.56 11.11,13.26 7.00,10.70 2.89,13.26 4.05,8.56 0.34,5.44 5.18,5.09" fill="#ffffff" stroke="#f5a50e" stroke-width="1.9" stroke-linejoin="round"/></svg>
<div class="t" style="left:467.3px;top:791px;font-size:12px;letter-spacing:-0.35px;">ADADOWNUSDT@Binance</div>
<div class="t" style="left:617.5px;top:791px;font-size:12px;letter-spacing:-0.35px;">ADADOWNUSDT</div>
<svg class="a" style="left:773.5px;top:788.9px;" width="14" height="14" viewBox="0 0 14 14"><polygon points="7.00,0.60 8.82,5.09 13.66,5.44 9.95,8.56 11.11,13.26 7.00,10.70 2.89,13.26 4.05,8.56 0.34,5.44 5.18,5.09" fill="#ffffff" stroke="#f5a50e" stroke-width="1.9" stroke-linejoin="round"/></svg>
<div class="a" style="left:730px;top:835px;width:65px;height:22px;background:#f3f3f6;border:1px solid #c9cbd8;box-sizing:border-box;"></div>
<div class="t" style="left:562.5px;top:841px;font-size:12px;width:400px;text-align:center;">OK</div>
<div class="a" style="left:801px;top:835px;width:65px;height:22px;background:#f3f3f6;border:1px solid #c9cbd8;box-sizing:border-box;"></div>
<div class="t" style="left:633.5px;top:841px;font-size:12px;width:400px;text-align:center;">Cancel</div>
<svg class="a" style="left:0;top:0" width="1280" height="1023" viewBox="0 0 1280 1023"><rect x="11.5" y="65.5" width="54.5" height="73.5" rx="4" fill="none" stroke="#ff0000" stroke-width="2.2"/><rect x="396.3" y="331.3" width="48.7" height="34.5" rx="4" fill="none" stroke="#ff0000" stroke-width="2.2"/><path d="M66.5 139.6 L472 298.6" stroke="#ff0000" stroke-width="2.1"/><path d="M470.3 294 L479.8 301.9 L467.8 302 Z" fill="#ff0000" stroke="#ff0000" stroke-width="0.3" stroke-linejoin="round"/></svg>
</body></html>
